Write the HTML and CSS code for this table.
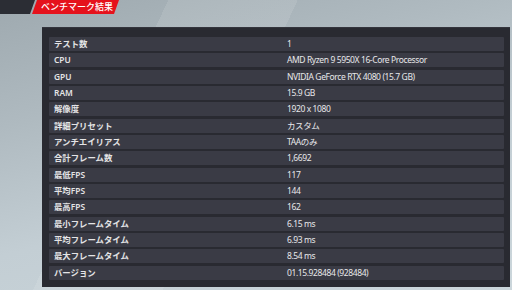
FILE: index.html
```html
<!DOCTYPE html>
<html lang="ja">
<head>
<meta charset="utf-8">
<link rel="stylesheet" href="styles.css">
</head>
<body>
<div class="screen">
  <div class="stripe"></div>
  <div class="header">
    <div class="slab"></div>
    <div class="tab">ベンチマーク結果</div>
  </div>
  <div class="panel">
    <div class="row"><span class="k">テスト数</span><span class="v">1</span></div>
    <div class="row"><span class="k">CPU</span><span class="v">AMD Ryzen 9 5950X 16-Core Processor</span></div>
    <div class="row"><span class="k">GPU</span><span class="v">NVIDIA GeForce RTX 4080 (15.7 GB)</span></div>
    <div class="row"><span class="k">RAM</span><span class="v">15.9 GB</span></div>
    <div class="row"><span class="k">解像度</span><span class="v">1920 x 1080</span></div>
    <div class="row"><span class="k">詳細プリセット</span><span class="v">カスタム</span></div>
    <div class="row"><span class="k">アンチエイリアス</span><span class="v">TAAのみ</span></div>
    <div class="row"><span class="k">合計フレーム数</span><span class="v">1,6692</span></div>
    <div class="row"><span class="k">最低FPS</span><span class="v">117</span></div>
    <div class="row"><span class="k">平均FPS</span><span class="v">144</span></div>
    <div class="row"><span class="k">最高FPS</span><span class="v">162</span></div>
    <div class="row"><span class="k">最小フレームタイム</span><span class="v">6.15 ms</span></div>
    <div class="row"><span class="k">平均フレームタイム</span><span class="v">6.93 ms</span></div>
    <div class="row"><span class="k">最大フレームタイム</span><span class="v">8.54 ms</span></div>
    <div class="row"><span class="k">バージョン</span><span class="v">01.15.928484 (928484)</span></div>
  </div>
</div>
</body>
</html>
```
FILE: styles.css
```css
html, body {
  margin: 0;
  padding: 0;
}
body {
  width: 512px;
  height: 290px;
  overflow: hidden;
  font-family: "Noto Sans", "Noto Sans CJK JP", sans-serif;
}
.screen {
  position: relative;
  width: 512px;
  height: 290px;
  overflow: hidden;
  background: linear-gradient(165deg, #9ea9af 0%, #afbac0 30%, #c3ced4 60%, #cbd6db 100%);
}
.stripe {
  position: absolute;
  left: 0;
  top: 0;
  width: 512px;
  height: 290px;
  background: linear-gradient(115deg, rgba(0,0,0,0) 0%, rgba(0,0,0,0) 26%, rgba(255,255,255,0.10) 26%, rgba(255,255,255,0.10) 46%, rgba(0,0,0,0) 46%);
}
.header {
  position: relative;
  display: flex;
  height: 14px;
}
.slab {
  width: 35px;
  height: 14px;
  background: #2b2d34;
  clip-path: polygon(0 0, 100% 0, calc(100% - 5px) 100%, 0 100%);
}
.tab {
  margin-left: -3px;
  width: 87px;
  height: 14px;
  padding-left: 9px;
  box-sizing: border-box;
  background: #e5121c;
  color: #ffffff;
  font-size: 9px;
  line-height: 14px;
  font-weight: 500;
  white-space: nowrap;
  clip-path: polygon(5px 0, 100% 0, calc(100% - 5px) 100%, 0 100%);
}
.panel {
  position: relative;
  margin: 13px 0 0 42px;
  width: 468px;
  height: 260px;
  box-sizing: border-box;
  padding: 9px 6px 0 7px;
  background: #292a31;
  border-top: 1px solid #34353d;
  display: flex;
  flex-direction: column;
  gap: 2.33px;
}
.row {
  height: 14px;
  display: grid;
  grid-template-columns: 238px 1fr;
  align-items: center;
  background: #3a3b45;
  border-radius: 1px;
  color: #e4e4e6;
  line-height: 14px;
  white-space: nowrap;
}
.k {
  padding-left: 5px;
  font-size: 8.4px;
  font-weight: 600;
}
.v {
  font-size: 8.5px;
  letter-spacing: -0.4px;
  color: #e8e8ea;
}
```
